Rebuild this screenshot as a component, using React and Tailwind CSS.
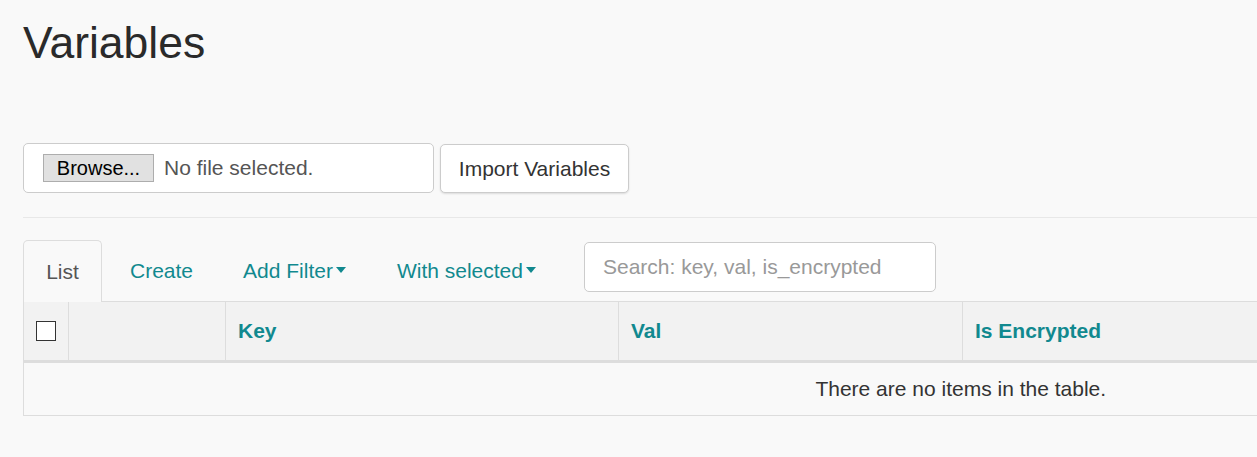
import React from "react";

const TEAL = "text-[#11898f]";

const COLS = [
  { label: "", w: "w-[45px]" },
  { label: "", w: "w-[157px]" },
  { label: "Key", w: "w-[393px]" },
  { label: "Val", w: "w-[344px]" },
  { label: "Is Encrypted", w: "w-[935px]" },
];

function Caret() {
  return <span className="inline-block ml-[3px] mb-[2px] w-0 h-0 border-x-[5px] border-t-[6px] border-x-transparent border-t-[#11898f] align-middle" />;
}

export default function App() {
  return (
    <div className="min-h-[457px] w-full overflow-hidden bg-[#f9f9f9] pl-[23px] pt-[19px] text-[#333] text-[21px]" style={{ fontFamily: "'Liberation Sans', Arial, sans-serif" }}>
      <h1 className="text-[44.5px] leading-[48px] font-normal text-[#2a2a2a]">Variables</h1>

      <div className="mt-[76px] flex items-start gap-[6px]">
        <div className="w-[411px] h-[50px] flex items-center pl-[19px] bg-white border border-[#cccccc] rounded-[5px]">
          <span className="w-[111px] h-[28px] flex items-center justify-center bg-[#e1e1e1] border border-[#adadad] text-black text-[20px] leading-none">Browse...</span>
          <span className="ml-[10px] text-[#555] text-[21px]">No file selected.</span>
        </div>
        <button className="mt-[1px] w-[189px] h-[49px] bg-white border border-[#cccccc] rounded-[5px] shadow-[0_1px_2px_rgba(0,0,0,0.12)] text-[#333] text-[21px]">Import Variables</button>
      </div>

      <div className="mt-[24px] border-t border-[#e8e8e8]" />

      <div className="mt-[22px] flex items-start border-b border-[#dddddd] h-[62px] w-[1874px]">
        <div className="-mb-px h-[62px] w-[79px] flex items-center justify-center border border-b-0 border-[#dddddd] rounded-t-[5px] bg-[#f9f9f9] text-[#555]">List</div>
        <div className={`ml-[6px] h-[61px] px-[22px] flex items-center ${TEAL}`}>Create</div>
        <div className={`ml-[6px] h-[61px] px-[22px] flex items-center ${TEAL}`}>Add Filter<Caret /></div>
        <div className={`ml-[6px] h-[61px] pl-[23px] pr-[22px] flex items-center ${TEAL}`}>With selected<Caret /></div>
        <div className="ml-[26px] mt-[2px] w-[352px] h-[50px] flex items-center px-[18px] bg-white border border-[#cccccc] rounded-[5px] text-[#999] text-[21px]">Search: key, val, is_encrypted</div>
      </div>

      <table className="table-fixed border-collapse w-[1874px] border-l border-[#dddddd]">
        <thead>
          <tr className="bg-[#f2f2f2] h-[59px] border-b-[3px] border-[#dddddd]">
            {COLS.map((c, i) => (
              <th key={i} className={`${c.w} border-r border-[#dddddd] text-left font-bold pl-[12px] ${TEAL} text-[21px]`}>
                {i === 0 ? (
                  <span className="block w-[20px] h-[20px] border border-[#333] bg-white" />
                ) : c.label}
              </th>
            ))}
          </tr>
        </thead>
        <tbody>
          <tr className="h-[54px] border-b border-[#dddddd]">
            <td colSpan={5} className="text-center text-[#333] text-[21px]">There are no items in the table.</td>
          </tr>
        </tbody>
      </table>
    </div>
  );
}
